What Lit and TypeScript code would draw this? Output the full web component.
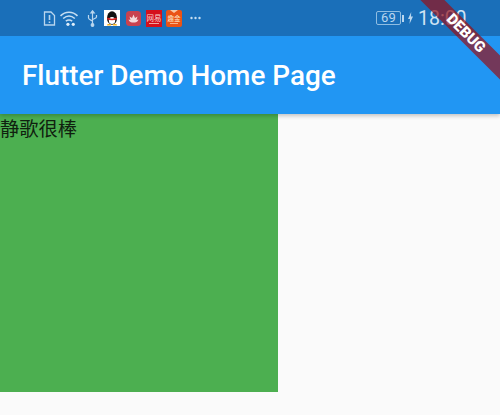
import { LitElement, html, css } from "lit";
import { customElement } from "lit/decorators.js";

@customElement("app-root")
export class AppRoot extends LitElement {
  static styles = css`
    :host { display: block; position: relative; width: 500px; height: 415px; overflow: hidden; background: #fafafa; font-family: Roboto, "Noto Sans CJK SC", sans-serif; }
    .appbar { background: #2196f3; height: 114px; box-shadow: 0 2px 4px rgba(0,0,0,.22); position: relative; display: flex; flex-direction: column; }
    .status { height: 36px; background: #1a6fb9; display: flex; align-items: center; padding-left: 43px; color: #b9d6ee; box-sizing: border-box; }
    .status svg { display: block; flex: none; }
    .sim { margin-right: 3px; }
    .wifi { margin-right: 8px; }
    .usb { margin-right: 6px; }
    .qq { margin-right: 6px; }
    .lotus { margin-right: 5px; }
    .wy { margin-right: 3px; }
    .hs { margin-right: 7px; }
    .dots { margin-right: 175px; }
    .batt { width: 25px; height: 14px; border: 1px solid #8fbde2; border-radius: 2px; box-sizing: border-box; font-size: 13px; line-height: 12px; text-align: center; color: #b9d6ee; letter-spacing: .3px; }
    .nub { width: 2px; height: 7px; background: #b9d6ee; margin: 0 4px 0 1px; }
    .bolt { margin-right: 5px; }
    .time { font-size: 19.5px; font-weight: 400; color: #cfe3f3; white-space: nowrap; }
    .title { flex: 1; display: flex; align-items: center; padding: 1px 0 0 22px; color: #fff; font-size: 27.9px; font-weight: 500; white-space: nowrap; }
    .box { width: 278px; height: 278px; background: #4caf50; font-size: 19.3px; line-height: 28px; color: #10200f; font-family: "Noto Sans CJK SC", sans-serif; }
    .banner { position: absolute; top: 24.5px; left: 406px; width: 120px; height: 16.5px; background: rgba(151,16,24,.7); transform: rotate(45deg); transform-origin: center; color: #fff; font-weight: 900; font-size: 15px; line-height: 16.5px; text-align: center; white-space: nowrap; }
  `;
  render() {
    return html`
      <div class="appbar">
        <div class="status">
          <svg class="sim" width="13" height="16" viewBox="0 0 12 16" fill="none" stroke="#b9d6ee" stroke-width="1.3"><path d="M1 2h6.500L11 5.500V15H1z"/><path d="M6 5v5M6 11.500v1.500" stroke-width="1.600"/></svg>
          <svg class="wifi" width="20" height="17" viewBox="0 0 18 16" fill="none" stroke="#c6deF2" stroke-width="1.500"><path d="M1 5.500C5.500 1 12.500 1 17 5.500"/><path d="M3.500 8C7 5 11 5 14.500 8"/><path d="M6 10.500c2-1.500 4-1.500 6 0"/><circle cx="8" cy="13.500" r="1.500" fill="#dfeefa" stroke="none"/><circle cx="13" cy="13.500" r="1.500" fill="#dfeefa" stroke="none"/></svg>
          <svg class="usb" width="11" height="17" viewBox="0 0 11 17" fill="none" stroke="#b9d6ee" stroke-width="1.200"><path d="M5.500 1v15M1.500 5v3c0 1.500 4 2.500 4 3.500M9.500 5v2c0 1.500-4 2-4 3"/><path d="M3.800 3 5.500.8 7.200 3z" fill="#b9d6ee"/><circle cx="5.500" cy="15" r="1.300" fill="#b9d6ee"/></svg>
          <svg class="qq" width="16" height="16" viewBox="0 0 16 16"><rect width="16" height="16" fill="#fff"/><ellipse cx="8" cy="8" rx="5" ry="6.800" fill="#111"/><ellipse cx="8" cy="10.500" rx="3.200" ry="3.600" fill="#fff"/><path d="M3.500 7.500c2.800 1.500 6.200 1.500 9 0l.5 1.800c-2.800 1.300-7.200 1.300-10 0z" fill="#d71f1f"/><path d="M3.500 14h3.500v1.500H3zM9 14h3.500l.5 1.500H9z" fill="#f2b01c"/></svg>
          <svg class="lotus" width="15" height="15" viewBox="0 0 15 15"><rect width="15" height="15" rx="3.500" fill="#c8424f"/><path d="M7.500 3.500 9 7l2.500-1.500L10.500 9l2-.5C12 11 9.500 11.500 7.500 11.500S3 11 2.500 8.500l2 .5-1-3.500L6 7z" fill="#f4d9da"/></svg>
          <svg class="wy" width="16" height="17" viewBox="0 0 16 17"><rect width="16" height="17" fill="#d5101c"/><text x="8" y="10.500" font-size="7.500" text-anchor="middle" fill="#f7d7d2" font-family="Noto Sans CJK SC">网易</text><rect x="3" y="13" width="10" height="1" fill="#eda5a0"/></svg>
          <svg class="hs" width="18" height="17" viewBox="0 0 18 17"><rect x="1" width="16" height="17" rx="2" fill="#ea5316"/><path d="M5 0l4 3 4-3z" fill="#f8c9a8"/><text x="9" y="11" font-size="6.500" text-anchor="middle" fill="#fbe6c6" font-family="Noto Sans CJK SC">趣金</text><rect x="5" y="13" width="8" height="1" fill="#f6b48a"/></svg>
          <svg class="dots" width="11" height="4" viewBox="0 0 11 4" fill="#c6deF2"><circle cx="1.500" cy="2" r="1.200"/><circle cx="5.500" cy="2" r="1.200"/><circle cx="9.500" cy="2" r="1.200"/></svg>
          <div class="batt">69</div><div class="nub"></div>
          <svg class="bolt" width="5" height="12" viewBox="0 0 5 12" fill="#b9d6ee"><path d="M3.200 0 0 7h2L1.500 12 5 4.500H3z"/></svg>
          <div class="time">18:00</div>
        </div>
        <div class="title">Flutter Demo Home Page</div>
      </div>
      <div class="box">静歌很棒</div>
      <div class="banner">DEBUG</div>
    `;
  }
}
